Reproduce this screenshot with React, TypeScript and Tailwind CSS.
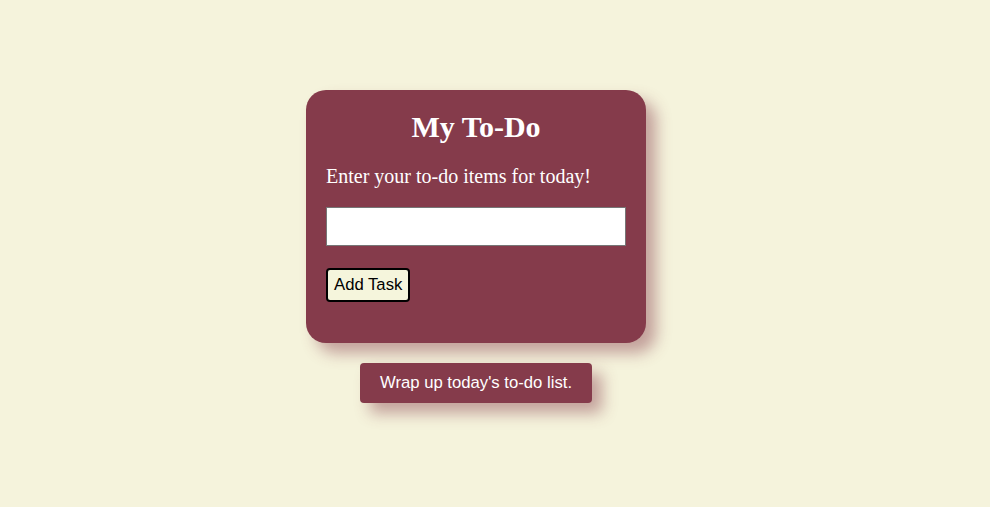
export default function App() {
  return (
    <div className="min-h-screen bg-[#f5f3dc] flex flex-col items-center pt-[90px] pr-[38px]">
      <div className="w-[340px] bg-[#853b4b] rounded-[20px] px-[20px] pt-[19px] pb-[41px] shadow-[10px_10px_15px_rgba(133,59,75,0.45)]">
        <h1 className="text-center text-white font-bold text-[30px] leading-[36px] font-['Liberation_Serif',serif]">
          My To-Do
        </h1>
        <p className="mt-[19px] text-white text-[20px] leading-[24px] font-['Liberation_Serif',serif]">
          Enter your to-do items for today!
        </p>
        <input
          type="text"
          className="mt-[19px] block w-[300px] h-[39px] bg-white border border-[#767676] outline-none"
        />
        <button className="mt-[22px] h-[34px] px-[6px] bg-[#f5f5dc] border-2 border-black rounded-[4px] text-black text-[16.7px] font-['Liberation_Sans',sans-serif]">
          Add Task
        </button>
      </div>
      <button className="mt-[20px] h-[40px] px-[20px] bg-[#853b4b] rounded-[4px] text-white text-[16.7px] font-['Liberation_Sans',sans-serif] shadow-[10px_10px_15px_rgba(133,59,75,0.45)]">
        Wrap up today's to-do list.
      </button>
    </div>
  );
}
